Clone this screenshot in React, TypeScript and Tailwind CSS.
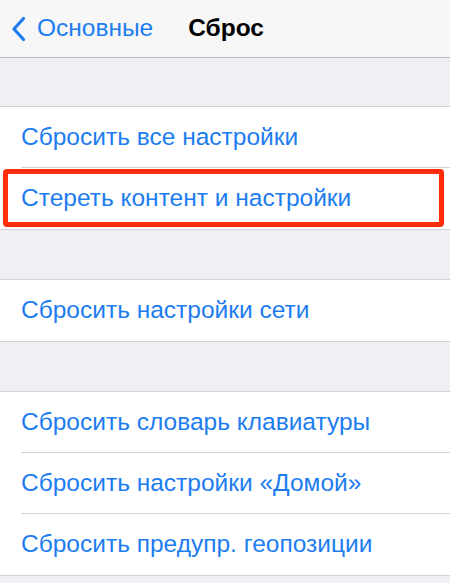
import React from 'react';

/**
 * Settings › Основные › Сброс — iOS 7 style grouped list.
 * Rows are grouped into sections; the "erase" row carries a red highlight frame.
 */

type Row = { label: string; highlight?: boolean };

const sections: Row[][] = [
  [
    { label: 'Сбросить все настройки' },
    { label: 'Стереть контент и настройки', highlight: true },
  ],
  [{ label: 'Сбросить настройки сети' }],
  [
    { label: 'Сбросить словарь клавиатуры' },
    { label: 'Сбросить настройки «Домой»' },
    { label: 'Сбросить предупр. геопозиции' },
  ],
];

function NavBar() {
  return (
    <div className="h-[58px] bg-[#f7f7f8] border-b border-[#b8b8bc] flex items-center">
      <div className="flex items-center pl-[11px] text-[#1c7cf0]">
        <svg width="15" height="26" viewBox="0 0 15 26" fill="none">
          <path d="M12.5 2.5 L3 13 L12.5 23.5" stroke="currentColor" strokeWidth="3.2" strokeLinecap="round" strokeLinejoin="round" />
        </svg>
        <span className="ml-[11px] text-[24.5px] leading-none">Основные</span>
      </div>
      <span className="ml-[35px] text-[24.5px] leading-none font-bold text-black">Сброс</span>
    </div>
  );
}

function Section({ rows }: { rows: Row[] }) {
  return (
    <div className="bg-white border-y border-[#d4d4d8]">
      {rows.map((r, i) => (
        <div key={r.label} className="relative">
          <div className="pl-[21px]">
            <div
              className={
                'h-[61px] flex items-center text-[24.5px] text-[#1c7cf0] ' +
                (i < rows.length - 1 ? 'border-b border-[#d4d4d8]' : '')
              }
            >
              {r.label}
            </div>
          </div>
          {r.highlight && (
            <div className="absolute left-[3px] right-[6px] top-[1px] bottom-[2px] border-[5px] border-[#ff2d0a] rounded-[4px]" />
          )}
        </div>
      ))}
    </div>
  );
}

export default function App() {
  return (
    <div
      className="w-[450px] h-[583px] bg-[#efeff4] overflow-hidden"
      style={{ fontFamily: '"Liberation Sans", "Noto Sans", sans-serif' }}
    >
      <NavBar />
      <div className="flex flex-col gap-[49px] pt-[48px]">
        {sections.map((rows, i) => (
          <Section key={i} rows={rows} />
        ))}
      </div>
    </div>
  );
}
